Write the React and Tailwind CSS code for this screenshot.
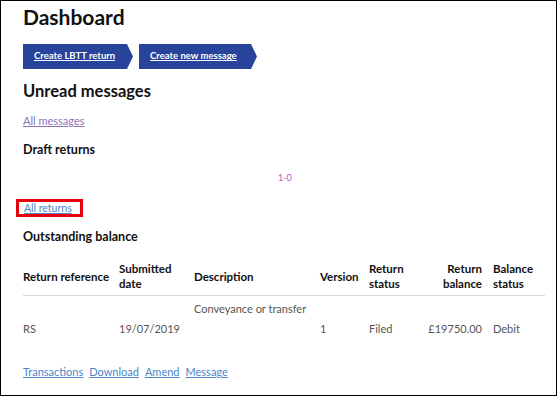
import React from 'react'

const font = { fontFamily: 'Lato, "Open Sans", Arial, sans-serif' }

function Arrow({ label, w }) {
  return (
    <div className="flex items-stretch h-[25px]">
      <div className={`bg-[#27449a] flex items-center pl-[11px] ${w}`}>
        <a href="#" className="text-white text-[9.5px] font-bold underline whitespace-nowrap">{label}</a>
      </div>
      <svg width="10" height="25" viewBox="0 0 10 25" className="block">
        <polygon points="0,0 4,0 10,12.5 4,25 0,25" fill="#27449a" />
      </svg>
    </div>
  )
}

const cols = 'grid grid-cols-[96px_75px_126px_49px_56px_57px_63px]'

export default function App() {
  return (
    <div style={font} className="w-[557px] h-[396px] border border-black bg-white overflow-hidden relative">
      <div className="pl-[22px] pt-[3px]">
        <h1 className="text-[21px] font-bold text-[#111] leading-[26px]">Dashboard</h1>

        <div className="flex gap-[6px] mt-[14px]">
          <Arrow label="Create LBTT return" w="w-[100px]" />
          <Arrow label="Create new message" w="w-[108px]" />
        </div>

        <h2 className="text-[16.5px] font-bold text-[#111] mt-[11px] leading-[22px]">Unread messages</h2>

        <a href="#" className="block mt-[12px] text-[11px] text-[#8a72bb] underline leading-[14px] w-fit">All messages</a>

        <h3 className="text-[12.5px] font-bold text-[#111] mt-[14px] leading-[16px]">Draft returns</h3>

        <div className="mt-[14px] ml-[255px] text-[9px] text-[#b45cbd] leading-[12px]">1-0</div>

        <div className="mt-[15px] -ml-[7px] w-[67px] h-[18px] border-[3px] border-[#e8000d] flex items-center pl-[5px]">
          <a href="#" className="text-[10.5px] text-[#4a86c8] underline leading-[12px] whitespace-nowrap">All returns</a>
        </div>

        <h3 className="text-[12.5px] font-bold text-[#111] mt-[12px] leading-[16px]">Outstanding balance</h3>

        <div className="mt-[16px] w-[522px] text-[11px]">
          <div className={`${cols} items-center h-[35px] border-b border-[#d8d8d8] font-bold text-[11.5px] text-[#111] leading-[15px] pb-[6px]`}>
            <div>Return reference</div>
            <div>Submitted<br />date</div>
            <div>Description</div>
            <div>Version</div>
            <div>Return<br />status</div>
            <div className="text-right">Return<br />balance</div>
            <div className="pl-[11px]">Balance<br />status</div>
          </div>
          <div className={`${cols} items-center h-[66px] text-[#555] leading-[14px]`}>
            <div>RS</div>
            <div>19/07/2019</div>
            <div className="self-start pt-[6px] whitespace-nowrap">Conveyance or transfer</div>
            <div>1</div>
            <div>Filed</div>
            <div className="text-right">£19750.00</div>
            <div className="pl-[11px]">Debit</div>
          </div>
        </div>

        <div className="flex gap-[6px] mt-[3px] text-[11px] leading-[14px]">
          <a href="#" className="text-[#4a86c8] underline">Transactions</a>
          <a href="#" className="text-[#4a86c8] underline">Download</a>
          <a href="#" className="text-[#4a86c8] underline">Amend</a>
          <a href="#" className="text-[#4a86c8] underline">Message</a>
        </div>
      </div>
    </div>
  )
}
